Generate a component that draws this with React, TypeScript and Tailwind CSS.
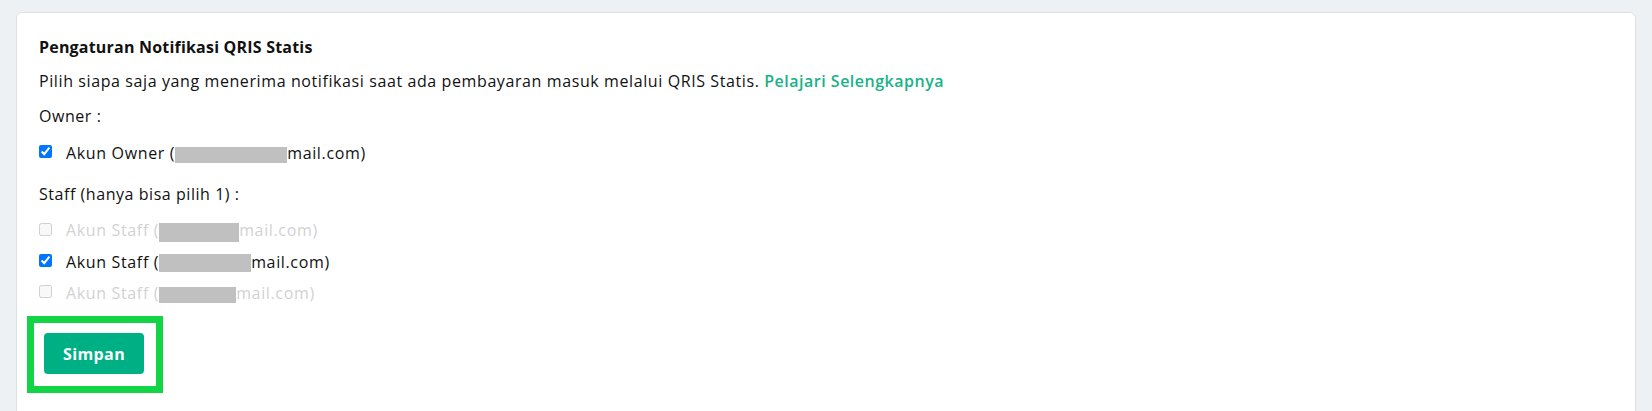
import React from "react";

const font = { fontFamily: '"Open Sans", "Noto Sans", Arial, sans-serif' };

function Row({
  label,
  blockW,
  blockH,
  checked,
  disabled,
}: {
  label: string;
  blockW: number;
  blockH: number;
  checked: boolean;
  disabled: boolean;
}) {
  return (
    <div className="flex h-[20px] items-center">
      <input
        type="checkbox"
        defaultChecked={checked}
        disabled={disabled}
        className="m-0 mb-[4px] h-[13px] w-[13px] shrink-0"
      />
      <span
        className={
          "ml-[14px] whitespace-nowrap text-[16px] leading-[20px] tracking-[0.65px] " +
          (disabled ? "text-[#d2d2d2]" : "text-[#111111]")
        }
      >
        {label} (
        <span
          className="inline-block bg-[#c0c0c0] align-middle"
          style={{ width: blockW, height: blockH }}
        />
        mail.com)
      </span>
    </div>
  );
}

export default function App() {
  return (
    <div className="min-h-[411px] w-[1652px] overflow-hidden bg-[#eef1f4] pt-[12px]" style={font}>
      <div className="mx-[16px] h-[420px] rounded-[6px] border border-[#dde1e6] bg-white px-[22px] pt-[24px]">
        <div className="h-[20px] whitespace-nowrap text-[16px] font-bold leading-[20px] tracking-[0.2px] text-[#111111]">
          Pengaturan Notifikasi QRIS Statis
        </div>
        <div className="mt-[14px] h-[20px] whitespace-nowrap text-[16px] leading-[20px] tracking-[0.6px] text-[#111111]">
          Pilih siapa saja yang menerima notifikasi saat ada pembayaran masuk melalui QRIS Statis.{" "}
          <span className="font-semibold tracking-[0.5px] text-[#18b287]">Pelajari Selengkapnya</span>
        </div>
        <div className="mt-[15px] h-[20px] text-[16px] leading-[20px] tracking-[0.55px] text-[#111111]">
          Owner :
        </div>
        <div className="mt-[17px]">
          <Row label="Akun Owner" blockW={112} blockH={16} checked disabled={false} />
        </div>
        <div className="mt-[21px] h-[20px] whitespace-nowrap text-[16px] leading-[20px] tracking-[0.55px] text-[#111111]">
          Staff (hanya bisa pilih 1) :
        </div>
        <div className="mt-[17px] flex flex-col gap-[11px]">
          <Row label="Akun Staff" blockW={80} blockH={19} checked={false} disabled />
          <Row label="Akun Staff" blockW={92} blockH={18} checked disabled={false} />
          <Row label="Akun Staff" blockW={77} blockH={16} checked={false} disabled />
        </div>
        <div className="-ml-[12px] mt-[13px] inline-block border-[7px] border-[#12d444] pb-[12px] pl-[10px] pr-[12px] pt-[10px]">
          <button className="flex h-[41px] w-[100px] items-center justify-center rounded-[4px] bg-[#00b085] text-[16px] font-bold tracking-[0.4px] text-white">
            Simpan
          </button>
        </div>
      </div>
    </div>
  );
}
